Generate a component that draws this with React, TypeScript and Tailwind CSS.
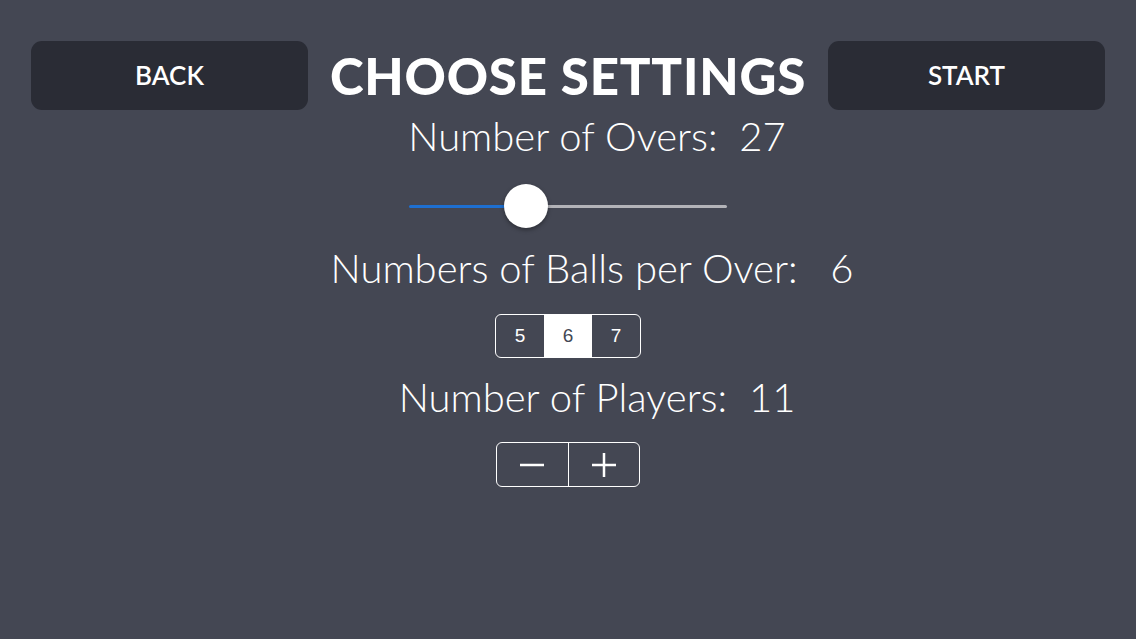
import React from "react";

export default function App() {
  return (
    <div
      className="w-[1136px] h-[639px] bg-[#444753] text-white flex flex-col items-center overflow-hidden"
      style={{ fontFamily: "Lato, 'Open Sans', sans-serif" }}
    >
      <div className="flex items-center mt-[41px] w-[1074px] justify-between">
        <button className="w-[277px] h-[69px] rounded-[11px] bg-[#2a2c35] text-[26px] font-semibold text-white">
          BACK
        </button>
        <h1 className="text-[51px] font-black leading-none tracking-[0.8px]">CHOOSE SETTINGS</h1>
        <button className="w-[277px] h-[69px] rounded-[11px] bg-[#2a2c35] text-[26px] font-semibold text-white">
          START
        </button>
      </div>

      <div className="mt-[2px] ml-[58px] text-[40px] font-light leading-[48px]">Number of Overs:&nbsp; 27</div>

      <div className="relative mt-[24px] w-[318px] h-[44px] flex items-center">
        <div className="h-[3px] w-[117px] bg-[#1e6fd0] rounded-l-full" />
        <div className="h-[3px] flex-1 bg-[#b3b3b8] rounded-r-full" />
        <div className="absolute left-[95px] top-0 w-[44px] h-[44px] rounded-full bg-white shadow-[0_2px_4px_rgba(0,0,0,0.35)]" />
      </div>

      <div className="mt-[16px] ml-[48px] text-[40px] font-light leading-[48px]">
        Numbers of Balls per Over:&nbsp;&nbsp; 6
      </div>

      <div
        className="mt-[22px] flex w-[146px] h-[44px] border-[1.5px] border-white rounded-[6px] overflow-hidden text-[19px]"
        style={{ fontFamily: "'Liberation Sans', Arial, sans-serif" }}
      >
        <div className="flex-1 flex items-center justify-center">5</div>
        <div className="flex-1 flex items-center justify-center bg-white text-[#444753]">6</div>
        <div className="flex-1 flex items-center justify-center">7</div>
      </div>

      <div className="mt-[15px] ml-[58px] text-[40px] font-light leading-[48px]">Number of Players:&nbsp; 11</div>

      <div className="mt-[21px] flex w-[144px] h-[45px] border-[1.5px] border-white rounded-[6px] overflow-hidden">
        <div className="flex-1 flex items-center justify-center border-r-[1.5px] border-white">
          <svg width="26" height="26" viewBox="0 0 26 26">
            <line x1="1" y1="13" x2="25" y2="13" stroke="white" strokeWidth="2.5" />
          </svg>
        </div>
        <div className="flex-1 flex items-center justify-center">
          <svg width="26" height="26" viewBox="0 0 26 26">
            <line x1="1" y1="13" x2="25" y2="13" stroke="white" strokeWidth="2.5" />
            <line x1="13" y1="1" x2="13" y2="25" stroke="white" strokeWidth="2.5" />
          </svg>
        </div>
      </div>
    </div>
  );
}
